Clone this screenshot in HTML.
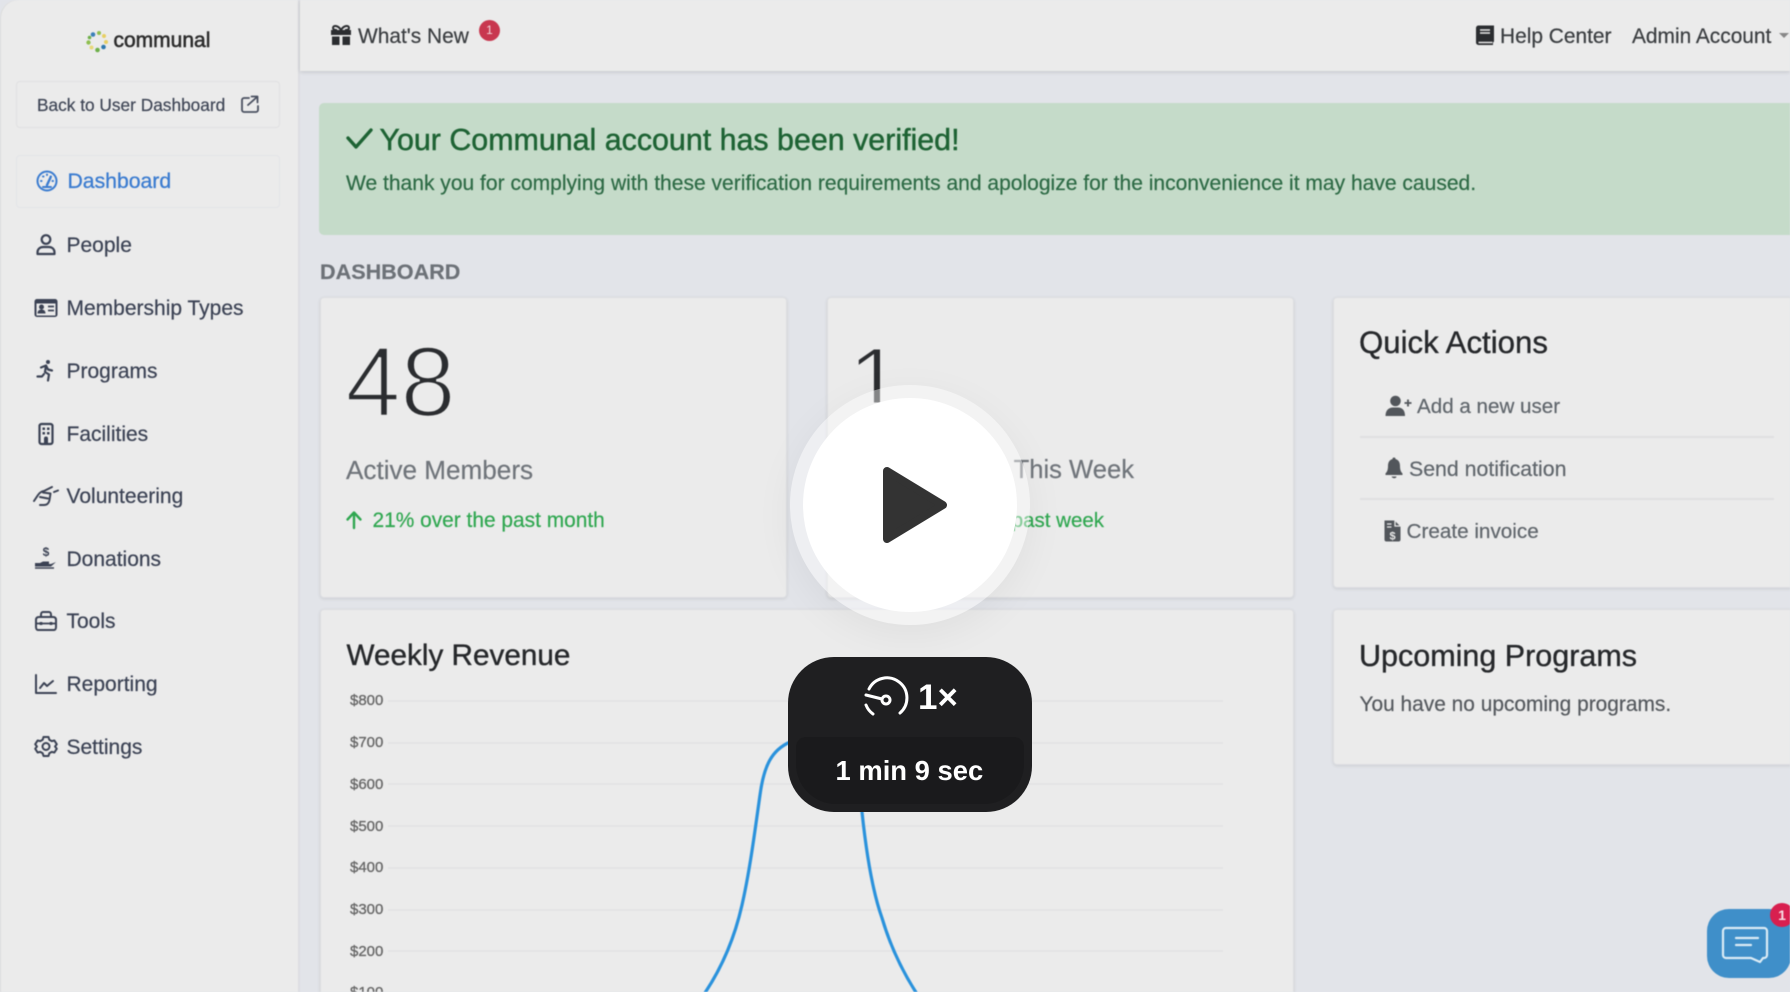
<!DOCTYPE html>
<html lang="en">
<head>
<meta charset="utf-8">
<title>Communal Dashboard</title>
<style>
html,body{margin:0;padding:0;width:1790px;height:992px;overflow:hidden;background:#e2e4e9;font-family:"Liberation Sans",sans-serif}
#base{position:absolute;left:0;top:0;width:1790px;height:992px;overflow:hidden;filter:blur(.6px);background:#e2e4e9}
.t{position:absolute;white-space:nowrap;line-height:1;-webkit-text-stroke:.2px}
.box{position:absolute;box-sizing:border-box}
.card{position:absolute;box-sizing:border-box;background:#ebebeb;border:1px solid #dddee1;border-radius:4px;box-shadow:0 1px 3px rgba(0,0,0,.1)}
.nav{font-size:21px;color:#3b4254;left:66.500px}
.act{color:#60666c}
.h{color:#26282b;-webkit-text-stroke:.35px #26282b}
.lab{font-size:15px;color:#666;left:350px;-webkit-text-stroke:.3px #666}
.hd{font-size:20.900px;color:#3a3d40}
svg{position:absolute;left:0;top:0}
</style>
</head>
<body>
<div id="base">
  <!-- sidebar and header -->
  <div class="box" style="left:0;top:0;width:300px;height:992px;background:#ebebeb;border-right:2px solid #dddee2;border-top-left-radius:18px;box-shadow:inset 1px 0 0 #dcdcdc"></div>
  <div class="box" style="left:300px;top:0;width:1490px;height:71px;background:#ebebeb;box-shadow:0 1px 4px rgba(0,0,0,.14)"></div>

  <!-- sidebar -->
  <div class="t" style="left:113.500px;top:30px;font-size:21px;color:#2c2c2c;-webkit-text-stroke:.55px #2c2c2c">communal</div>
  <div class="box" style="left:16px;top:81px;width:264px;height:47px;border:1px solid #e0e0e2;border-radius:4px"></div>
  <div class="t" style="left:37px;top:96.500px;font-size:17.300px;color:#3f4656">Back to User Dashboard</div>
  <div class="box" style="left:16px;top:155px;width:264px;height:53px;border:1px solid #e3e4e8;border-radius:4px"></div>
  <div class="t" style="left:67.500px;top:171px;font-size:21.200px;color:#3b7cd0;-webkit-text-stroke:.3px #3b7cd0">Dashboard</div>
  <div class="t nav" style="top:235px">People</div>
  <div class="t nav" style="top:298px">Membership Types</div>
  <div class="t nav" style="top:360.500px">Programs</div>
  <div class="t nav" style="top:423.500px">Facilities</div>
  <div class="t nav" style="top:486px">Volunteering</div>
  <div class="t nav" style="top:548.500px">Donations</div>
  <div class="t nav" style="top:611px">Tools</div>
  <div class="t nav" style="top:674px">Reporting</div>
  <div class="t nav" style="top:736.500px">Settings</div>

  <!-- header -->
  <div class="t hd" style="left:358px;top:26.500px">What's New</div>
  <div class="box" style="left:479px;top:20px;width:21px;height:21px;border-radius:50%;background:#c8374f;color:#f3d5da;font-size:12px;line-height:21px;text-align:center">1</div>
  <div class="t hd" style="left:1500px;top:26.500px">Help Center</div>
  <div class="t hd" style="left:1632px;top:26.500px">Admin Account</div>
  <div class="box" style="left:1779px;top:33px;width:0;height:0;border-left:5px solid transparent;border-right:5px solid transparent;border-top:5px solid #888"></div>

  <!-- banner -->
  <div class="box" style="left:319px;top:102.500px;width:1480px;height:132px;background:#c5dbc9;border-radius:5px"></div>
  <div class="t" style="left:379.500px;top:124.500px;font-size:30.400px;color:#1e6334;-webkit-text-stroke:.45px #1e6334">Your Communal account has been verified!</div>
  <div class="t" style="left:346px;top:173px;font-size:21.040px;color:#2d6a45">We thank you for complying with these verification requirements and apologize for the inconvenience it may have caused.</div>

  <div class="t" style="left:320px;top:261px;font-size:21.600px;font-weight:700;color:#6d7278">DASHBOARD</div>

  <!-- cards -->
  <div class="card" style="left:320px;top:297px;width:467px;height:301px"></div>
  <div class="card" style="left:827px;top:297px;width:467px;height:301px"></div>
  <div class="card" style="left:1333px;top:297px;width:480px;height:291px"></div>
  <div class="card" style="left:320px;top:609px;width:974px;height:420px"></div>
  <div class="card" style="left:1333px;top:609px;width:480px;height:156px"></div>

  <div class="t" style="left:345.500px;top:331.500px;font-size:99px;color:#2b2d30;-webkit-text-stroke:2.600px #ebebeb">48</div>
  <div class="t" style="left:848px;top:332.500px;font-size:98px;color:#2b2d30;-webkit-text-stroke:2.600px #ebebeb;clip-path:inset(0 0 28px 0)">1</div>
  <div class="t" style="left:346px;top:456.500px;font-size:26.100px;color:#70757b">Active Members</div>
  <div class="t" style="right:656px;top:458px;font-size:25.600px;color:#70757b">This Week</div>
  <div class="t" style="left:372.500px;top:511px;font-size:20.900px;color:#2fa750">21% over the past month</div>
  <div class="t" style="right:686px;top:511px;font-size:20.500px;color:#2fa750">over the past week</div>

  <div class="t h" style="left:1359px;top:326.500px;font-size:31.200px">Quick Actions</div>
  <div class="t act" style="left:1417px;top:397px;font-size:20.600px">Add a new user</div>
  <div class="box" style="left:1360px;top:436px;width:414px;height:2px;background:#dfe0e1"></div>
  <div class="t act" style="left:1409px;top:459px;font-size:21.300px">Send notification</div>
  <div class="box" style="left:1360px;top:498px;width:414px;height:2px;background:#dfe0e1"></div>
  <div class="t act" style="left:1406.500px;top:522px;font-size:20.700px">Create invoice</div>

  <div class="t h" style="left:346.500px;top:641px;font-size:29.700px">Weekly Revenue</div>
  <div class="t h" style="left:1359px;top:640.500px;font-size:30.500px">Upcoming Programs</div>
  <div class="t" style="left:1359.500px;top:695px;font-size:20.900px;color:#55595e">You have no upcoming programs.</div>

  <div class="t lab" style="top:693px">$800</div>
  <div class="t lab" style="top:735px">$700</div>
  <div class="t lab" style="top:776.500px">$600</div>
  <div class="t lab" style="top:818.500px">$500</div>
  <div class="t lab" style="top:860px">$400</div>
  <div class="t lab" style="top:902px">$300</div>
  <div class="t lab" style="top:943.500px">$200</div>
  <div class="t lab" style="top:985px">$100</div>

  <svg width="1790" height="992" viewBox="0 0 1790 992" fill="none">
    <!-- chart -->
    <g stroke="#e2e2e3" stroke-width="1.500">
      <path d="M388 701H1223M388 743H1223M388 784H1223M388 826H1223M388 868H1223M388 910H1223M388 951H1223M388 993H1223"/>
    </g>
    <path d="M700 1000C718 975 733 945 742 905C750 870 755 830 760 795C764 765 772 750 790 742C810 733 835 745 848 770C856 785 860 800 862 812C866 850 872 890 882 918C890 945 902 972 921 1000" stroke="#2a92dc" stroke-width="3.200"/>

    <!-- logo ring -->
    <g>
      <circle cx="93" cy="34.500" r="2.300" fill="#3b80b8"/>
      <circle cx="99" cy="33" r="2" fill="#8fbf4f"/>
      <circle cx="104" cy="36" r="2" fill="#e8cf62"/>
      <circle cx="106" cy="42" r="2" fill="#e8cf62"/>
      <circle cx="103.500" cy="47" r="2.300" fill="#2f78ad"/>
      <circle cx="97.500" cy="50" r="2.300" fill="#6eb04a"/>
      <circle cx="91.500" cy="47.500" r="2" fill="#e8d878"/>
      <circle cx="88.500" cy="42.500" r="2.200" fill="#8fbf4f"/>
      <circle cx="89.500" cy="37.500" r="1.800" fill="#6eb04a"/>
    </g>

    <!-- back link icon -->
    <g stroke="#4a5060" stroke-width="1.800" stroke-linecap="round" stroke-linejoin="round">
      <path d="M249 98H244a2 2 0 0 0-2 2v10a2 2 0 0 0 2 2h12a2 2 0 0 0 2-2v-4"/>
      <path d="M248 105L257 97M251.500 96.500h6v6"/>
    </g>

    <!-- dashboard gauge -->
    <g transform="translate(47,181)" stroke="#3b7cd0" stroke-width="2" stroke-linecap="round">
      <circle r="9.500"/>
      <path d="M0 4L3.500-3.500" stroke-width="2.400"/>
      <path d="M-6 0H-5.500M-4-4.500H-3.500M0-6.500V-6M6 0H5.500M4-4.500H3.500" stroke-width="2"/>
      <path d="M-4 6H4" stroke-width="2"/>
    </g>

    <!-- people -->
    <g transform="translate(46,245)" stroke="#3b4254" stroke-width="2.200" stroke-linejoin="round">
      <circle cy="-5.500" r="4.300"/>
      <path d="M-8.500 9H8.500V7.500C8.500 4 6 2 2.500 2H-2.500C-6 2-8.500 4-8.500 7.500Z"/>
    </g>

    <!-- membership id card -->
    <g transform="translate(46,308)">
      <rect x="-11.500" y="-9" width="23" height="18" rx="2.500" fill="#3b4254"/>
      <rect x="-9.500" y="-4.500" width="19" height="12" fill="#ebebeb"/>
      <circle cx="-4.500" cy="-1" r="2.500" fill="#3b4254"/>
      <path d="M-8.500 5.500C-8.500 2.500-6.500 1.500-4.500 1.500S-.5 2.500-.5 5.500Z" fill="#3b4254"/>
      <path d="M2-1.500H8M2 2.500H8" stroke="#3b4254" stroke-width="1.800"/>
    </g>

    <!-- programs runner -->
    <g transform="translate(46,371)" stroke="#3b4254" stroke-width="2.200" stroke-linecap="round" stroke-linejoin="round">
      <circle cx="2" cy="-9" r="2" fill="#3b4254" stroke="none"/>
      <path d="M-5-3.500L0-5.500L2-1.500L6-.5M0-5.500L-1 1L3 3.500L2 9.500M-2 3L-4 5.500L-8.500 5.500"/>
    </g>

    <!-- facilities -->
    <g transform="translate(46,433.500)">
      <rect x="-6.500" y="-9.500" width="13" height="20" rx="2" stroke="#3b4254" stroke-width="2.200"/>
      <path d="M-3.500-6h2.500v2.500h-2.500zM1-6h2.500v2.500H1zM-3.500-1.500h2.500V1h-2.500zM1-1.500h2.500V1H1zM-2 10V5a1 1 0 0 1 4 0v5z" fill="#3b4254"/>
    </g>

    <!-- volunteering hands -->
    <g transform="translate(46,496)" stroke="#3b4254" stroke-width="2" stroke-linecap="round" stroke-linejoin="round">
      <path d="M-12 5L-8-1C-6-4-4-4.500-2-5L6-9"/>
      <path d="M-6 9L-2 9C1 9 3 7 3.500 4L4.500-2.500L-3-3.500"/>
      <path d="M-6 1L2 2.500M8-4L12-5.500"/>
    </g>

    <!-- donations hand -->
    <g transform="translate(46,559)" fill="#3b4254">
      <text x="0" y="-3" font-size="12" font-weight="700" text-anchor="middle" font-family="Liberation Sans, sans-serif">$</text>
      <path d="M-11 4H-6L-3 2.500H3V5H5L10 3L5 7.500H-11Z"/>
      <path d="M-11 9H8" stroke="#3b4254" stroke-width="1.600"/>
    </g>

    <!-- tools toolbox -->
    <g transform="translate(46,621)" stroke="#3b4254" stroke-width="2" stroke-linejoin="round">
      <path d="M-10-1C-10-3-9-4-7-4H7C9-4 10-3 10-1V6C10 8 9 9 8 9H-8C-9 9-10 8-10 6Z"/>
      <path d="M-5-4V-6.500C-5-8-4-9-3-9H3C4-9 5-8 5-6.500V-4"/>
      <path d="M-10 2.500H10" stroke-width="1.800"/>
      <path d="M-5 1V4M5 1V4" stroke-width="2.600"/>
    </g>

    <!-- reporting -->
    <g transform="translate(46,684)" stroke="#3b4254" stroke-width="2" stroke-linecap="round" stroke-linejoin="round">
      <path d="M-10-9V9H10"/>
      <path d="M-6 4L-2-1L1 2L7-3"/>
    </g>

    <!-- settings gear -->
    <g transform="translate(46,746.500)" stroke="#3b4254" stroke-width="2" stroke-linejoin="round">
      <circle r="3.500"/>
      <path d="M-2.500-9.500H2.500L3.300-6.800L5.700-5.400L8.400-6L10.800-2.200L9-0.000L10.800 2.200L8.400 6L5.700 5.400L3.300 6.800L2.500 9.500H-2.500L-3.300 6.800L-5.700 5.400L-8.400 6L-10.800 2.200L-9 0L-10.800-2.200L-8.400-6L-5.700-5.400L-3.300-6.800Z"/>
    </g>

    <!-- gift -->
    <g transform="translate(341,35)" fill="#2b2d30">
      <rect x="-10" y="-5" width="20" height="5"/>
      <rect x="-9" y="1.500" width="7.500" height="8.500"/>
      <rect x="1.500" y="1.500" width="7.500" height="8.500"/>
      <path d="M0-5C-3-10-8-10-8-7C-8-5.500-6-5-4-5M0-5C3-10 8-10 8-7C8-5.500 6-5 4-5" fill="none" stroke="#2b2d30" stroke-width="2"/>
    </g>

    <!-- book -->
    <g transform="translate(1485,35)">
      <path d="M-9-7a2.500 2.500 0 0 1 2.500-2.500H9V6.500L8 7.500V10H-6.500A2.500 2.500 0 0 1-9 7.500Z" fill="#2b2d30"/>
      <path d="M-5-5H5M-5-2H5" stroke="#ebebeb" stroke-width="1.600"/>
      <path d="M-6.500 7.500H7.500" stroke="#ebebeb" stroke-width="1.500"/>
    </g>

    <!-- banner check -->
    <path d="M348 138L356 147L371 130" stroke="#1e6334" stroke-width="3.400" stroke-linecap="round" stroke-linejoin="round"/>

    <!-- green arrow -->
    <path d="M354 528V513M347.500 519.500L354 512.500L360.500 519.500" stroke="#2fa750" stroke-width="2.400" stroke-linecap="round" stroke-linejoin="round"/>

    <!-- add user -->
    <g transform="translate(1396,406)" fill="#52565b">
      <circle cx="-.500" cy="-5" r="5.300"/>
      <path d="M-10.500 10C-10.500 4-7 1.500-3 1.500H2C6 1.500 9 4 9 10Z"/>
      <path d="M8.500-3H15.500M12-6.500V.5" stroke="#52565b" stroke-width="1.800"/>
    </g>

    <!-- bell -->
    <g transform="translate(1394,468)" fill="#52565b">
      <path d="M0-10.500C1-10.500 1.500-10 1.500-9C5-8 6-5 6-2C6 2 7 4 8.500 5.500V7H-8.500V5.500C-7 4-6 2-6-2C-6-5-5-8-1.500-9C-1.500-10 -1-10.500 0-10.500Z"/>
      <path d="M-2.500 8.500H2.500C2.500 10.500-1.500 11-2.500 8.500Z"/>
    </g>

    <!-- invoice -->
    <g transform="translate(1392.500,531)">
      <path d="M-8-10.500H2L8-4.500V8.500A2 2 0 0 1 6 10.500H-6A2 2 0 0 1-8 8.500Z" fill="#52565b"/>
      <path d="M2.500-10.500V-5H8" stroke="#ebebeb" stroke-width="1.300"/>
      <path d="M-5.500-7H-1M-5.500-4H-1" stroke="#ebebeb" stroke-width="1.300"/>
      <text x="0" y="8.500" font-size="11" font-weight="700" text-anchor="middle" fill="#ebebeb" font-family="Liberation Sans, sans-serif">$</text>
    </g>

    <!-- chat widget -->
    <rect x="1707" y="909" width="84" height="69" rx="22" fill="#3f8fc9"/>
    <g stroke="#dcecf6" stroke-width="2.200" stroke-linecap="round" stroke-linejoin="round">
      <path d="M1726 928H1764A3 3 0 0 1 1767 931V955A3 3 0 0 1 1764 958H1763L1760 962L1751 958H1726A3 3 0 0 1 1723 955V931A3 3 0 0 1 1726 928Z"/>
      <path d="M1736 938H1758M1736 945H1751"/>
    </g>
    <circle cx="1782" cy="915" r="12" fill="#d81f4f"/>
    <text x="1782" y="920" font-size="14" font-weight="700" text-anchor="middle" fill="#f7dfe5" font-family="Liberation Sans, sans-serif">1</text>
  </svg>
</div>

<!-- overlay -->
<div class="box" style="left:790px;top:385px;width:240px;height:240px;border-radius:50%;background:rgba(255,255,255,.42);box-shadow:0 10px 40px rgba(0,0,0,.05)"></div>
<div class="box" style="left:803px;top:398px;width:214px;height:214px;border-radius:50%;background:#fff"></div>
<svg width="1790" height="992" viewBox="0 0 1790 992" fill="none">
  <path d="M887 471L943 505L887 539Z" fill="#333" stroke="#333" stroke-width="8" stroke-linejoin="round"/>
</svg>
<div class="box" style="left:788px;top:657px;width:244px;height:155px;border-radius:46px;background:#1f1f21"></div>
<div class="box" style="left:796px;top:737px;width:228px;height:67px;border-radius:10px 10px 40px 40px;background:#1a1a1c"></div>
<svg width="1790" height="992" viewBox="0 0 1790 992" fill="none">
  <g transform="translate(886,699)" stroke="#fff" stroke-width="3" stroke-linecap="round">
    <path d="M-17-10A20 20 0 1 1 14 14"/>
    <path d="M-20 6A20 20 0 0 0-13 15"/>
    <path d="M-20-4L-4 0"/>
    <circle cx="0" cy="1" r="4"/>
  </g>
</svg>
<div class="t" style="left:918px;top:680px;font-size:35px;font-weight:700;color:#fff;-webkit-text-stroke:0">1×</div>
<div class="t" style="left:835.500px;top:757px;font-size:27.400px;font-weight:700;color:#fff;-webkit-text-stroke:0">1 min 9 sec</div>
</body>
</html>
